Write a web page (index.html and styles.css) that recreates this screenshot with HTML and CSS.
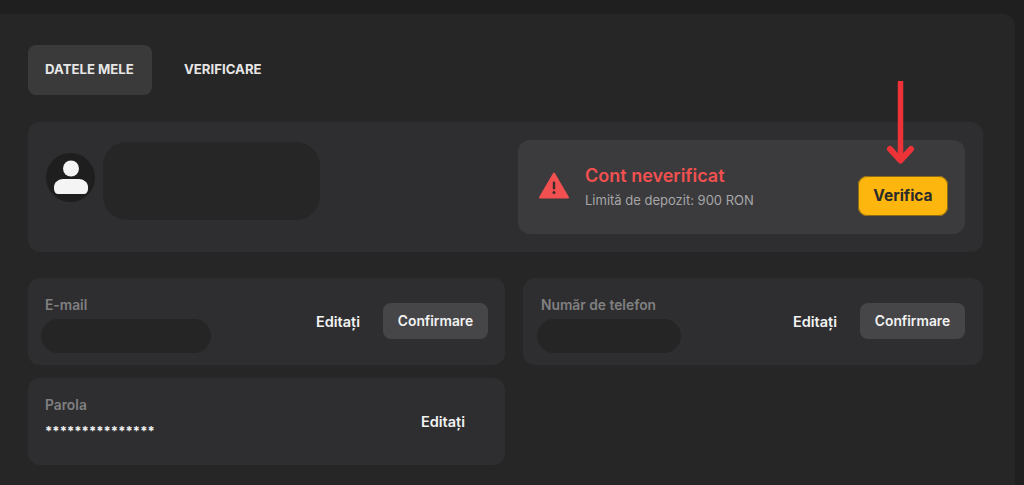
FILE: index.html
```html
<!DOCTYPE html>
<html lang="en">

<head>
    <meta charset="UTF-8">
    <title>Datele mele</title>
    <link rel="stylesheet" href="styles.css">
</head>

<body>
    <div class="panel">
        <div class="tabs">
            <div class="tab active">DATELE MELE</div>
            <div class="tab">VERIFICARE</div>
        </div>

        <div class="profile">
            <div class="user">
                <div class="avatar">
                    <svg width="34" height="35" viewBox="0 0 34 35">
                        <circle cx="17" cy="8.500" r="8" fill="#f4f4f4" />
                        <path d="M0 29v-2c0-5 5-8 9-8h16c4 0 9 3 9 8v2c0 3-2 5-4 5H4c-2 0-4-2-4-5z" fill="#f4f4f4" />
                    </svg>
                </div>
                <div class="hidden-name"></div>
            </div>

            <div class="alert">
                <svg class="alert-icon" width="30" height="27" viewBox="0 0 30 27">
                    <path d="M15 1.500L29 25.500H1z" fill="#f25050" stroke="#f25050" stroke-width="2" stroke-linejoin="round" />
                    <rect x="13.800" y="9.500" width="2.400" height="8" rx="1" fill="#3a2a2a" />
                    <circle cx="15" cy="20.600" r="1.500" fill="#3a2a2a" />
                </svg>
                <div class="alert-text">
                    <div class="alert-title">Cont neverificat</div>
                    <div class="alert-sub">Limită de depozit: 900 RON</div>
                </div>
                <button type="button" class="verify-btn">Verifica</button>
            </div>
        </div>

        <div class="fields">
            <div class="field">
                <div class="field-info">
                    <div class="field-label">E-mail</div>
                    <div class="hidden-value email"></div>
                </div>
                <div class="edit">Editați</div>
                <button type="button" class="confirm-btn">Confirmare</button>
            </div>

            <div class="field field-phone">
                <div class="field-info">
                    <div class="field-label">Număr de telefon</div>
                    <div class="hidden-value phone"></div>
                </div>
                <div class="edit">Editați</div>
                <button type="button" class="confirm-btn">Confirmare</button>
            </div>

            <div class="field">
                <div class="field-info">
                    <div class="field-label">Parola</div>
                    <div class="password">***************</div>
                </div>
                <div class="edit edit-solo">Editați</div>
            </div>
        </div>

        <!-- red arrow drawn over the screenshot -->
        <svg class="arrow" width="30" height="86" viewBox="0 0 30 86">
            <path d="M15.500 1V80" stroke="#ee3338" stroke-width="5.500" fill="none" />
            <path d="M5 69L15.500 80.500L26 69" stroke="#ee3338" stroke-width="6" fill="none" stroke-linecap="round" stroke-linejoin="round" />
        </svg>
    </div>
</body>

</html>
```

FILE: styles.css
```css
* {
    box-sizing: border-box;
}

body {
    margin: 0;
    height: 485px;
    overflow: hidden;
    background: #1f1f1f;
    font-family: Inter, "Liberation Sans", sans-serif;
    color: #f2f2f2;
}

.panel {
    position: relative;
    width: 1015px;
    height: 471px;
    margin-top: 14px;
    padding: 31px 32px 0 28px;
    background: #262626;
    border-radius: 0 12px 0 0;
}

.tabs {
    display: flex;
    gap: 6px;
}

.tab {
    height: 48px;
    padding: 0 18px 0 17px;
    display: flex;
    align-items: center;
    border-radius: 8px;
    font-size: 13.200px;
    font-weight: 700;
    color: #e6e6e6;
}

.tab.active {
    width: 124px;
    height: 50px;
    padding-bottom: 2px;
    background: #3a3a3a;
}

.tab:not(.active) {
    padding-left: 26px;
}

.profile {
    height: 130px;
    margin-top: 27px;
    padding: 18px;
    display: flex;
    justify-content: space-between;
    background: #2e2e30;
    border-radius: 12px;
}

.user {
    display: flex;
    gap: 8px;
    margin-top: 2px;
}

.avatar {
    width: 49px;
    height: 49px;
    margin-top: 11px;
    display: flex;
    align-items: center;
    justify-content: center;
    background: #1e1e1e;
    border-radius: 50%;
}

.hidden-name {
    width: 217px;
    height: 78px;
    background: #262626;
    border-radius: 24px;
}

.alert {
    width: 447px;
    height: 94px;
    padding: 0 17px 0 21px;
    display: flex;
    align-items: center;
    background: #3b3b3d;
    border-radius: 12px;
}

.alert-icon {
    margin: 0 16px 3px 0;
}

.alert-text {
    flex: 1;
}

.alert-title {
    font-size: 18px;
    font-weight: 600;
    color: #f25050;
    line-height: 22px;
}

.alert-sub {
    margin-top: 4px;
    font-size: 13px;
    color: #a6a6a8;
    line-height: 18px;
}

.verify-btn {
    width: 90px;
    height: 40px;
    margin-top: 17px;
    border: none;
    border-radius: 9px;
    background: #fdb60e;
    box-shadow: inset 0 0 0 1px #8a6a14;
    color: #2b2b2b;
    font-family: inherit;
    font-size: 15.500px;
    font-weight: 700;
}

.fields {
    display: grid;
    grid-template-columns: 477px 460px;
    grid-auto-rows: 87px;
    column-gap: 18px;
    row-gap: 13px;
    margin-top: 26px;
}

.field {
    padding: 0 17px 0 13px;
    display: flex;
    align-items: center;
    background: #2e2e30;
    border-radius: 12px;
}

.field-phone {
    padding-right: 18px;
    padding-left: 14px;
}

.field-info {
    flex: 1;
    align-self: flex-start;
    padding-top: 19px;
}

.field-label {
    margin-left: 4px;
    font-size: 13.800px;
    font-weight: 600;
    line-height: 17px;
    color: #808080;
}

.hidden-value {
    height: 34px;
    margin-top: 5px;
    background: #252525;
    border-radius: 17px;
}

.hidden-value.email {
    width: 170px;
}

.hidden-value.phone {
    width: 144px;
}

.password {
    margin: 9px 0 0 4px;
    font-size: 13px;
    font-weight: 700;
    line-height: 16px;
    letter-spacing: 0.050px;
    color: #f2f2f2;
}

.edit {
    margin-right: 23px;
    font-size: 14.500px;
    font-weight: 600;
    color: #f2f2f2;
}

.edit-solo {
    margin: 0 23px 0 0;
}

.confirm-btn {
    width: 105px;
    height: 36px;
    margin-top: -1px;
    border: none;
    border-radius: 8px;
    background: #464648;
    color: #f2f2f2;
    font-family: inherit;
    font-size: 13.800px;
    font-weight: 600;
}

.arrow {
    position: absolute;
    left: 885px;
    top: 66px;
}
```
